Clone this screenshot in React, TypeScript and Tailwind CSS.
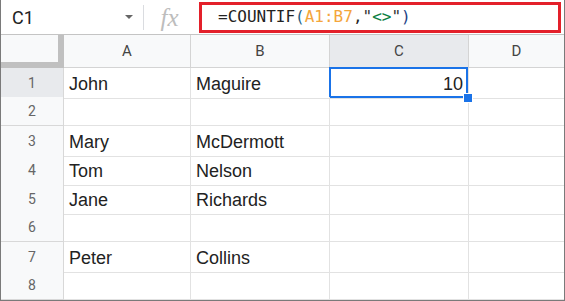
const cols = ['A', 'B', 'C', 'D'];

const rows: string[][] = [
  ['John', 'Maguire', '10', ''],
  ['', '', '', ''],
  ['Mary', 'McDermott', '', ''],
  ['Tom', 'Nelson', '', ''],
  ['Jane', 'Richards', '', ''],
  ['', '', '', ''],
  ['Peter', 'Collins', '', ''],
  ['', '', '', ''],
];

const gridCols = 'grid grid-cols-[63px_127px_139px_139px_1fr]';

const Toolbar = () => (
  <div className="flex h-[35px] items-center border-b border-[#c4c4c4] bg-white">
    {/* Name box */}
    <div className="flex w-[142px] items-center pl-[11px] pr-[10px]">
      <span className="flex-1 font-['Roboto',sans-serif] text-[18px] text-[#222]">C1</span>
      <span className="h-0 w-0 border-x-[4px] border-t-[4px] border-x-transparent border-t-[#666]" />
    </div>
    <div className="h-[25px] w-px bg-[#dadce0]" />
    {/* fx */}
    <div className="flex w-[55px] items-center justify-center pr-[4px]">
      <span className="font-['Liberation_Serif',serif] text-[25px] italic leading-none text-[#bdbdbd]">fx</span>
    </div>
    {/* Formula */}
    <div className="mr-[3px] flex h-[31px] flex-1 items-center border-[3px] border-[#e3202a] pl-[16px] font-['DejaVu_Sans_Mono',monospace] text-[16px] text-[#222]">
      <span>=COUNTIF</span>
      <span className="text-[#1e5f86]">(</span>
      <span className="text-[#f4a63b]">A1:B7</span>
      <span>,</span>
      <span className="text-[#333]">"</span>
      <span className="text-[#0b8043]">&lt;&gt;</span>
      <span className="text-[#333]">"</span>
      <span className="text-[#1e3f86]">)</span>
    </div>
  </div>
);

const App = () => {
  return (
    <div className="h-[301px] w-[565px] overflow-hidden bg-white">
      <div className="h-[301px] border-x border-b border-[#7a7a7a]">
        <Toolbar />

        {/* Column headers */}
        <div className={`${gridCols} h-[33px]`}>
          <div className="border-r-[6px] border-b-[6px] border-[#c0c0c0] bg-[#f8f9fa]" />
          {cols.map((c) => (
            <div
              key={c}
              className={`flex items-center justify-center border-b border-[#d4d4d4] font-['Roboto',sans-serif] text-[15px] text-[#444] ${
                c === 'C' ? 'bg-[#e8eaed]' : 'bg-[#f8f9fa]'
              } ${c === 'D' ? '' : 'border-r'}`}
            >
              {c}
            </div>
          ))}
        </div>

        {/* Rows */}
        {rows.map((row, i) => (
          <div key={i} className={`${gridCols} h-[29px]`}>
            <div
              className={`flex items-center justify-center border-r border-b border-[#d8d8d8] font-['Roboto',sans-serif] text-[14px] text-[#666] ${
                i === 0 ? 'bg-[#e8eaed]' : 'bg-[#f8f9fa]'
              }`}
            >
              {i + 1}
            </div>
            {row.map((v, j) => (
              <div
                key={j}
                className={`relative flex items-center border-b border-[#e2e2e2] px-[5px] pt-[3px] font-['Liberation_Sans',Arial,sans-serif] text-[18px] text-[#222] ${
                  j === 3 ? '' : 'border-r'
                } ${j === 2 ? 'justify-end' : ''}`}
              >
                {v}
                {i === 0 && j === 2 && (
                  <>
                    <div className="absolute -top-px -left-px right-0 bottom-0 border-2 border-[#1a73e8]" />
                    <div className="absolute -right-[5px] -bottom-[5px] z-10 h-[10px] w-[10px] border border-white bg-[#1a73e8]" />
                  </>
                )}
              </div>
            ))}
          </div>
        ))}
      </div>
    </div>
  );
};

export default App;
